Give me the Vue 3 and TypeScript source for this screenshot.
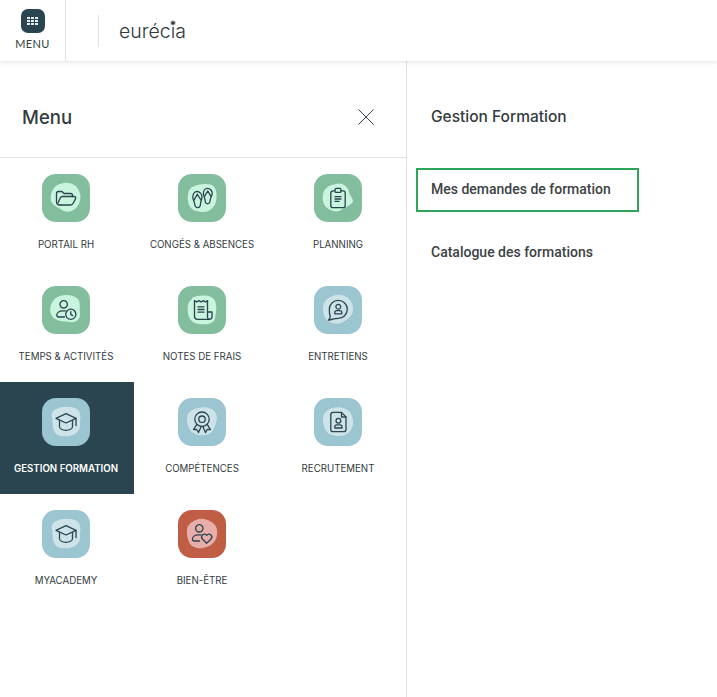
<script setup lang="ts">
interface Tile {
  label: string
  tone: 'green' | 'blue' | 'red'
  blob: string
  paths: string[]
  active?: boolean
}

const cap = [
  'M24 15.6 L34 20.3 L24 25 L14 20.3 Z',
  'M17.5 22.5 V28.5 C17.5 30.8 20.5 32.3 24 32.3 C27.5 32.3 30.5 30.8 30.5 28.5 V22.5',
  'M34 20.3 V27.5',
]

const tiles: Tile[] = [
  {
    label: 'PORTAIL RH', tone: 'green',
    blob: 'M22 9 C28 8 35 11 37 17 C40 23 38 29 35 33 C31 38 24 39 20 36 C16 33 11 32 9 27 C8 22 9 18 12 14 C15 10 18 10 22 9 Z',
    paths: [
      'M18 31 C15.5 31 14.5 30 14.5 28 V19.5 C14.5 18.2 15.4 17.5 16.5 17.5 H20 L22 19.5 H28.5 C29.8 19.5 30.5 20.4 30.5 21.5 V22.5',
      'M18 31 H28.5 C30 31 30.7 30.3 31.2 29.3 L33.6 24.6 C34.1 23.5 33.4 22.5 32 22.5 H20.5 C19.3 22.5 18.6 23 18.2 24 L16 29',
    ],
  },
  {
    label: 'CONGÉS & ABSENCES', tone: 'green',
    blob: 'M14 13 C20 10 28 9 34 11 C39 14 39 21 38 27 C37 33 32 38 25 38 C19 38 13 36 11 31 C9 26 9 16 14 13 Z',
    paths: [
      'M19 17.5 C16.5 17.5 14.8 20 14.8 23 C14.8 25.5 16.3 27.3 16.6 29.5 C16.9 32.3 18 33.7 19.6 33.7 C21.4 33.7 22.4 32.3 22.5 29.8 C22.7 27.3 24 25.5 24 23 C24 20 21.6 17.5 19 17.5 Z',
      'M19.3 20.3 L16 26 M19.3 20.3 L23 26',
      'M29.5 14.4 C27 14.4 25.4 16.8 25.4 19.5 C25.4 21.7 26.8 23.5 27 25.8 C27.2 28.3 28 29.8 29.5 29.8 C31.2 29.8 32 28.3 32.2 26 C32.5 23.5 34.2 21.7 34.2 19.3 C34.2 16.5 32 14.4 29.5 14.4 Z',
      'M29.8 17 L26.5 22.3 M29.8 17 L33 22.3',
    ],
  },
  {
    label: 'PLANNING', tone: 'green',
    blob: 'M22 10 C28 8 34 12 35 18 C36 22 39 24 39 27 C38 31 31 33 27 36 C23 39 16 37 12 33 C8 29 8 22 10 17 C13 12 17 11 22 10 Z',
    paths: [
      'M21 16.8 H19 C17.6 16.8 16.8 17.8 16.8 19.1 V31.4 C16.8 32.8 17.7 33.7 19 33.7 H29 C30.4 33.7 31.2 32.8 31.2 31.4 V19.1 C31.2 17.8 30.4 16.8 29 16.8 H27',
      'M22.2 14.4 H25.8 C26.6 14.4 27 15 27 15.7 V17.2 C27 17.9 26.6 18.4 25.8 18.4 H22.2 C21.4 18.4 21 17.9 21 17.2 V15.7 C21 15 21.4 14.4 22.2 14.4 Z',
      'M21 22.7 H27 M21 25 H27 M21 27.4 H25',
    ],
  },
  {
    label: 'TEMPS & ACTIVITÉS', tone: 'green',
    blob: 'M18 10 C24 8 32 9 36 13 C39 17 37 22 38 27 C39 33 34 37 28 36 C22 35 14 36 10 30 C7 25 8 19 11 15 C13 12 15 11 18 10 Z',
    paths: [
      'M21.7 14.6 A3.7 3.7 0 1 1 21.7 22 A3.7 3.7 0 1 1 21.7 14.6 Z',
      'M22.5 31 H17 C15.6 31 14.8 30.2 14.8 29.2 C14.8 26.5 17.5 24.8 21 24.8 H23.5',
      'M28.8 23.2 A5.1 5.1 0 1 1 28.8 33.4 A5.1 5.1 0 1 1 28.8 23.2 Z',
      'M28.8 25.6 V28.4 L30.6 29.6',
    ],
  },
  {
    label: 'NOTES DE FRAIS', tone: 'green',
    blob: 'M14 12 C20 9 28 9 33 11 C38 13 39 20 38 26 C37 32 38 36 30 38 C23 39 15 38 12 33 C9 28 8 16 14 13 Z',
    paths: [
      'M16.5 14.6 V30.5 C16.5 32.3 17.6 33.3 19.5 33.3 H31.5 C33 33.3 34 32.3 34 30.8 V26 H29.5',
      'M16.5 14.6 L18.8 16 L21 14.6 L23.2 16 L25.4 14.6 L27.5 16 L29.5 14.6 V30.8 C29.5 32.3 30.3 33.3 31.5 33.3',
      'M20 20.8 H26 M20 23.5 H26 M20 26.2 H26',
    ],
  },
  {
    label: 'ENTRETIENS', tone: 'blue',
    blob: 'M22 9 C27 8 33 10 36 14 C39 18 40 24 38 28 C35 33 31 35 27 37 C22 39 15 37 12 33 C9 29 8 22 10 17 C13 12 17 10 22 9 Z',
    paths: [
      'M24.3 14.3 C29.3 14.3 33.3 18.3 33.3 23.3 C33.3 28.3 29.3 32.3 24.3 32.3 C22.3 32.3 20.3 32.6 18.8 33.2 C17.5 33.7 15.6 34.2 14.5 34 C15.5 33.2 16.3 31.8 16.2 30.3 C15.5 28.8 15.3 25.3 15.3 23.3 C15.3 18.3 19.3 14.3 24.3 14.3 Z',
      'M24.3 18.3 A2.4 2.4 0 1 1 24.3 23.1 A2.4 2.4 0 1 1 24.3 18.3 Z',
      'M20.8 27.8 V26.7 C20.8 25.4 21.6 24.7 22.8 24.7 H25.8 C27 24.7 27.8 25.4 27.8 26.7 V27.8 Z',
    ],
  },
  {
    label: 'GESTION FORMATION', tone: 'blue', active: true,
    blob: 'M14 11 C20 8 30 8 35 11 C40 15 38 22 38 27 C38 33 34 37 27 38 C21 39 14 38 12 33 C10 28 11 24 10 20 C9 16 10 13 14 11 Z',
    paths: cap,
  },
  {
    label: 'COMPÉTENCES', tone: 'blue',
    blob: 'M20 10 C27 8 34 10 37 14 C40 18 39 23 37 28 C35 33 33 36 27 37 C21 38 15 36 12 32 C9 27 8 20 10 16 C12 13 15 11 20 10 Z',
    paths: [
      'M24 14 A7.2 7.2 0 1 1 24 28.4 A7.2 7.2 0 1 1 24 14 Z',
      'M24 18 A3.2 3.2 0 1 1 24 24.4 A3.2 3.2 0 1 1 24 18 Z',
      'M18.8 26.3 L15.6 31.6 L18.8 31.5 L20.5 34.6 L23.2 28.5',
      'M29.2 26.3 L32.4 31.6 L29.2 31.5 L27.5 34.6 L24.8 28.5',
    ],
  },
  {
    label: 'RECRUTEMENT', tone: 'blue',
    blob: 'M18 10 C25 8 32 10 36 14 C39 18 40 25 38 30 C36 35 31 38 25 38 C19 38 13 36 11 31 C9 26 8 20 10 16 C12 13 15 11 18 10 Z',
    paths: [
      'M27.5 14.4 H19 C17.6 14.4 16.8 15.3 16.8 16.6 V31.5 C16.8 32.8 17.7 33.7 19 33.7 H29.8 C31.1 33.7 32 32.8 32 31.5 V19 Z',
      'M27.5 14.4 V19 H32',
      'M24.4 20.3 A2.4 2.4 0 1 1 24.4 25.1 A2.4 2.4 0 1 1 24.4 20.3 Z',
      'M20.8 30 V28.8 C20.8 27.6 21.6 26.8 22.8 26.8 H26 C27.2 26.8 28 27.6 28 28.8 V30 Z',
    ],
  },
  {
    label: 'MYACADEMY', tone: 'blue',
    blob: 'M14 11 C20 8 30 8 35 11 C40 15 38 22 38 27 C38 33 34 37 27 38 C21 39 14 38 12 33 C10 28 11 24 10 20 C9 16 10 13 14 11 Z',
    paths: cap,
  },
  {
    label: 'BIEN-ÊTRE', tone: 'red',
    blob: 'M18 10 C24 7 32 10 36 14 C40 18 40 24 38 29 C35 35 30 37 25 38 C19 39 13 37 11 32 C9 28 8 20 10 16 C12 13 15 11 18 10 Z',
    paths: [
      'M21.3 14.6 A3.7 3.7 0 1 1 21.3 22 A3.7 3.7 0 1 1 21.3 14.6 Z',
      'M21.5 31 H16.6 C15.2 31 14.4 30.2 14.4 29.2 C14.4 26.5 17.2 24.8 20.5 24.8 H23',
      'M28.7 33.3 L24.6 29.2 C23.4 28 23.4 26.1 24.5 25 C25.7 23.8 27.6 23.9 28.7 25.4 C29.8 23.9 31.7 23.8 32.9 25 C34 26.1 34 28 32.8 29.2 Z',
    ],
  },
]

const dots = Array.from({ length: 9 }, (_, i) => i)
</script>

<template>
  <div class="page">
    <header class="topbar">
      <button class="menu-button" type="button">
        <span class="menu-badge">
          <span class="dots">
            <i v-for="d in dots" :key="d"></i>
          </span>
        </span>
        <span class="menu-word">MENU</span>
      </button>
      <span class="logo-rule"></span>
      <span class="logo">eurécia<svg class="logo-star" viewBox="0 0 8 8"><path d="M4 .6V7.4M1 2.2 7 5.8M7 2.2 1 5.8" /></svg></span>
    </header>

    <div class="body">
      <section class="panel">
        <div class="panel-head">
          <h2>Menu</h2>
          <svg class="close" viewBox="0 0 16 16"><path d="M.5 .5 15.5 15.5M15.5 .5 .5 15.5" /></svg>
        </div>
        <div class="grid">
          <a v-for="t in tiles" :key="t.label" class="tile" :class="{ active: t.active }">
            <svg class="tile-icon" :class="t.tone" viewBox="0 0 48 48">
              <rect class="bg" width="48" height="48" rx="14" />
              <path class="blob" :d="t.blob" />
              <path v-for="(p, i) in t.paths" :key="i" class="stroke" :d="p" />
            </svg>
            <span class="tile-label">{{ t.label }}</span>
          </a>
        </div>
      </section>

      <aside class="side">
        <h3>Gestion Formation</h3>
        <a class="link focused">Mes demandes de formation</a>
        <a class="link">Catalogue des formations</a>
      </aside>
    </div>
  </div>
</template>

<style>
html, body { margin: 0; background: #fff; }
</style>

<style scoped>
.page {
  width: 717px;
  height: 697px;
  overflow: hidden;
  display: flex;
  flex-direction: column;
  background: #fff;
  color: #333b3e;
  font-family: Inter, "Liberation Sans", sans-serif;
}
.topbar {
  height: 61px;
  flex: none;
  display: flex;
  align-items: center;
  box-shadow: 0 1px 4px rgba(42, 69, 80, 0.16);
  position: relative;
}
.menu-button {
  width: 66px;
  height: 61px;
  padding: 9px 0 0;
  box-sizing: border-box;
  border: 0;
  border-right: 1px solid #e2e2dc;
  background: #fff;
  display: flex;
  flex-direction: column;
  align-items: center;
  font: inherit;
  color: inherit;
}
.menu-badge {
  width: 24px;
  height: 24px;
  border-radius: 7px;
  background: #2a4550;
  display: flex;
  align-items: center;
  justify-content: center;
}
.dots {
  display: grid;
  grid-template-columns: repeat(3, 3px);
  grid-auto-rows: 2px;
  gap: 1px;
}
.dots i { background: #e6eef0; }
.menu-word {
  margin-top: 4px;
  font-family: Lato, sans-serif;
  font-size: 11px;
  line-height: 14px;
  letter-spacing: 0.3px;
}
.logo-rule {
  width: 1px;
  height: 32px;
  margin-left: 32px;
  background: #e2e2dc;
}
.logo {
  position: relative;
  margin-left: 20px;
  font-family: Inter, sans-serif;
  font-weight: 300;
  font-size: 19.5px;
  color: #2f383b;
}
.logo-star {
  position: absolute;
  left: 51px;
  top: 1px;
  width: 6px;
  height: 6px;
  background: #fff;
  fill: none;
  stroke: #2f383b;
  stroke-width: 1.5;
}
.body {
  flex: 1;
  display: flex;
  min-height: 0;
}
.panel {
  width: 407px;
  box-sizing: border-box;
  border-right: 1px solid #e2e2dc;
  flex: none;
}
.panel-head {
  height: 97px;
  box-sizing: border-box;
  border-bottom: 1px solid #e2e2dc;
  padding: 15px 32px 0 22px;
  display: flex;
  align-items: center;
  justify-content: space-between;
}
.panel-head h2 {
  margin: 0;
  font-family: Inter, sans-serif;
  font-size: 18.5px;
  font-weight: 500;
  color: #333b3e;
}
.close {
  width: 16px;
  height: 16px;
  fill: none;
  stroke: #2a4550;
  stroke-width: 1;
}
.grid {
  display: grid;
  grid-template-columns: repeat(3, 134px);
  grid-auto-rows: 112px;
  column-gap: 2px;
}
.tile {
  box-sizing: border-box;
  padding: 16px 2px 0 0;
  display: flex;
  flex-direction: column;
  align-items: center;
}
.tile.active { background: #2a4550; color: #fff; }
.tile-icon { width: 48px; height: 48px; flex: none; }
.tile-label {
  margin-top: 17px;
  font-size: 9.7px;
  line-height: 12px;
  white-space: nowrap;
  color: #333b3e;
}
.active .tile-label { color: #fff; font-weight: 600; }
.green .bg { fill: #82be9e; }
.green .blob { fill: #c9f4dd; }
.blue .bg { fill: #9ac5d1; }
.blue .blob { fill: #cde3e8; }
.red .bg { fill: #c05d45; }
.red .blob { fill: #e7aeaa; }
.stroke {
  fill: none;
  stroke: #2a4550;
  stroke-width: 1.3;
  stroke-linecap: round;
  stroke-linejoin: round;
}
.side {
  flex: 1;
  padding: 0 0 0 9px;
}
.side h3 {
  margin: 0;
  height: 107px;
  padding: 46px 0 0 15px;
  box-sizing: border-box;
  font-size: 15.5px;
  line-height: 20px;
  font-weight: 500;
  color: #333b3e;
}
.link {
  display: flex;
  align-items: center;
  width: 223px;
  height: 44px;
  padding-left: 15px;
  box-sizing: border-box;
  font-family: Roboto, sans-serif;
  font-size: 14px;
  font-weight: 500;
  color: #3c4245;
}
.link + .link { margin-top: 18px; }
.focused { border: 2px solid #2ea55a; padding-left: 13px; padding-bottom: 3px; }
</style>
